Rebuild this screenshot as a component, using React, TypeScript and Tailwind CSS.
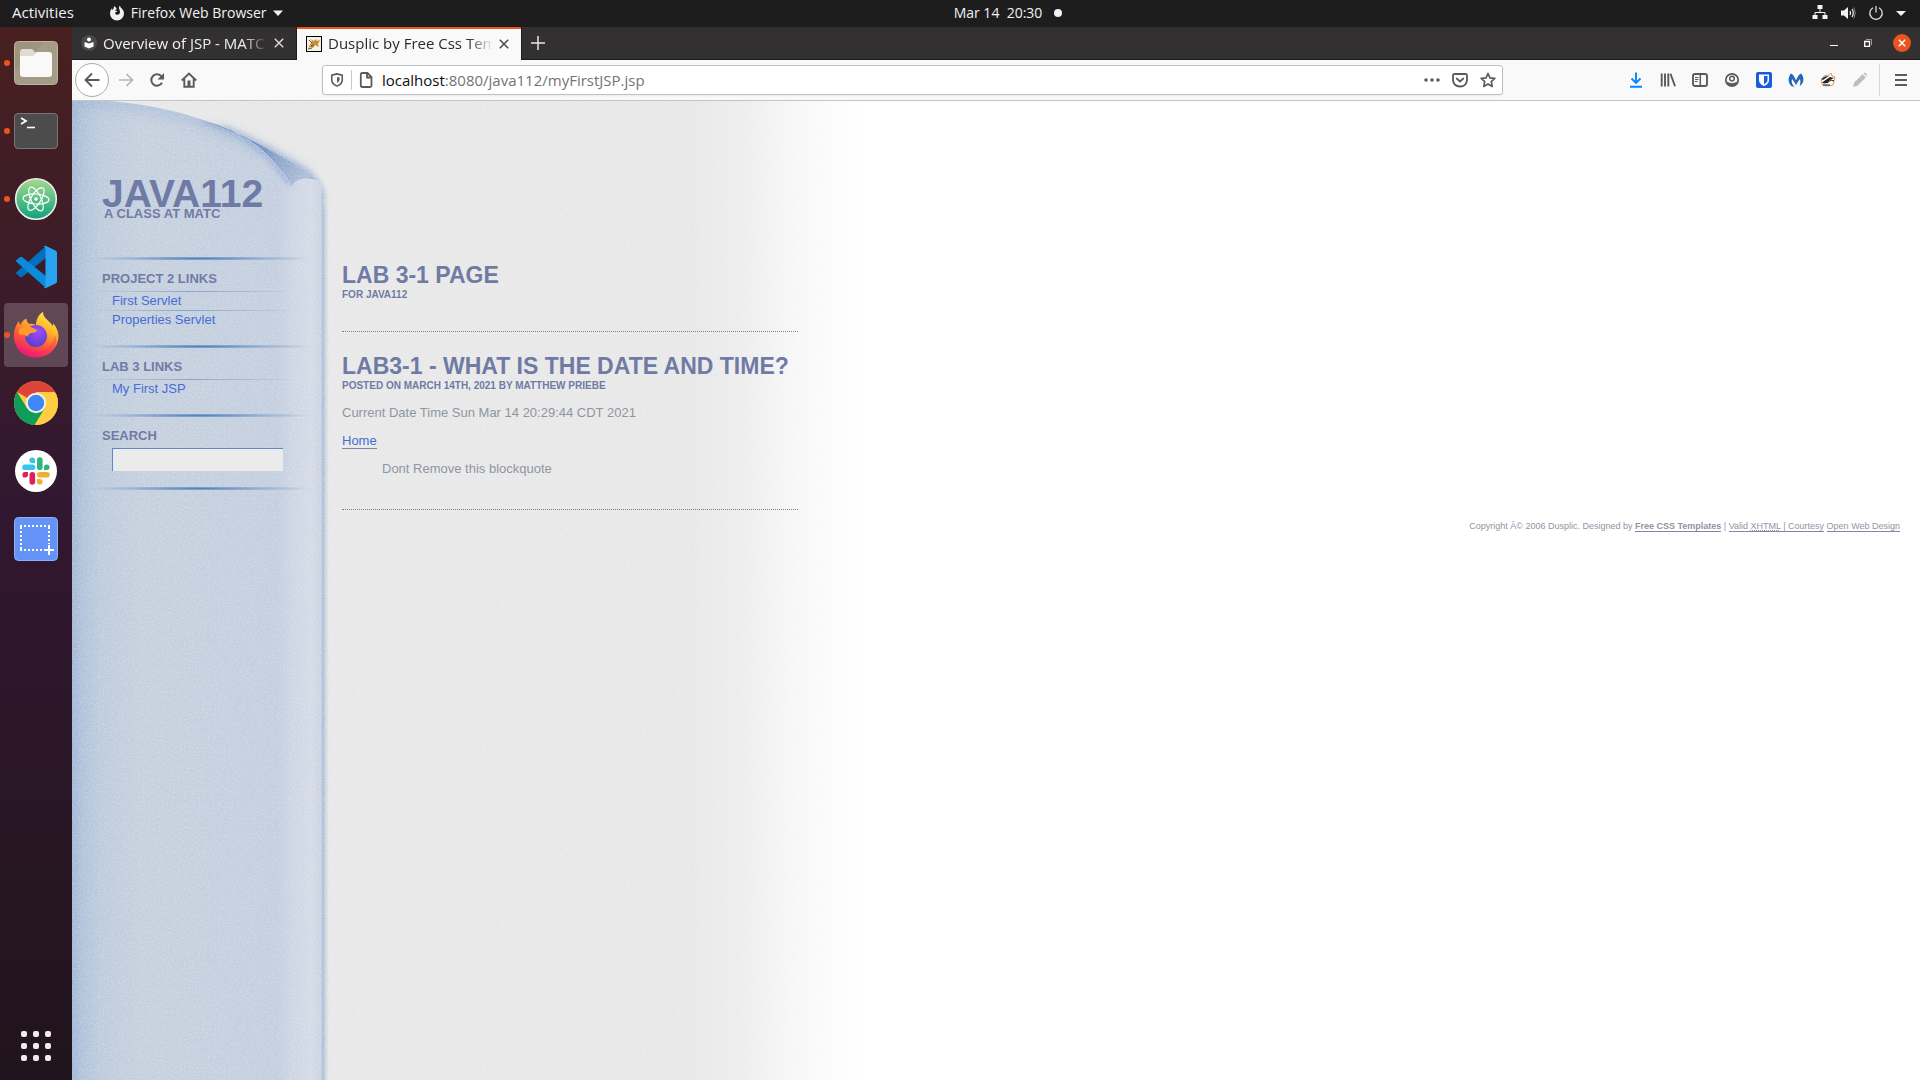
import React from "react";

const ui = "font-['Open_Sans','Noto_Sans',sans-serif]";

type IconProps = { className?: string; children: React.ReactNode; box?: string };

function Icon({ className = "size-4", box = "0 0 16 16", children }: IconProps) {
  return (
    <svg viewBox={box} className={"shrink-0 " + className} fill="none" aria-hidden="true">
      {children}
    </svg>
  );
}

function TopBar() {
  return (
    <header className="grid h-[27px] shrink-0 grid-cols-[1fr_auto_1fr] items-center bg-[#1d1d1d] pb-px text-sm text-[#f2f2f2]">
      <div className="flex items-center pl-3">
        <button type="button" className="mr-[35px] text-[15px]">Activities</button>
        <button type="button" className="flex items-center gap-1.5">
          <Icon>
            <path
              d="M8 15.5A7 7 0 0 1 1 8.4C1 6 2 4.300 3 3.200c0 .8.2 1.300.5 1.700C4.500 4 5.200 2.500 5 1c1.500.7 2.500 2 2.700 3.200-.9.2-1.500.7-1.700 1.300.7.300 1.300.4 2.300.5-.3 1-1.300 1.400-2.300 1.500.2 1.500 1.300 2.300 2.600 2.300A2.700 2.700 0 0 0 11 7c0-1.700-1-2.500-1-4 0-1.200.5-2 1-2.600 0 1.600 1.200 2.300 2.200 3.500C14.300 5.200 15 6.500 15 8.500a7 7 0 0 1-7 7z"
              fill="#f2f2f2"
            />
          </Icon>
          <span>Firefox Web Browser</span>
          <Icon className="size-2.5" box="0 0 10 10">
            <path d="M0 2.500h10L5 8z" fill="#f2f2f2" />
          </Icon>
        </button>
      </div>
      <button type="button" className="flex items-center gap-3 pl-24">
        <span className="whitespace-pre">Mar 14  20:30</span>
        <span className="size-2 rounded-full bg-[#f2f2f2]" />
      </button>
      <button type="button" aria-label="System menu" className="flex items-center justify-end gap-3 pr-3.5">
        <Icon className="size-4">
          <path d="M5.500 0h5v4h-5zM.5 10h5v4h-5zM10.500 10h5v4h-5z" fill="#f2f2f2" />
          <path d="M8 4v3.500M3 10V7.500h10V10" stroke="#f2f2f2" />
        </Icon>
        <Icon className="size-4">
          <path d="M1 5.500h3L8 2v12l-4-3.500H1z" fill="#f2f2f2" />
          <path d="M10 6q1.200 2 0 4" stroke="#f2f2f2" strokeWidth="1.300" />
          <path d="M12 4q2.600 4 0 8" stroke="#f2f2f2" strokeWidth="1.200" />
          <path d="M13.800 2.500q3 5.500 0 11" stroke="#888" />
        </Icon>
        <Icon className="size-4">
          <path d="M5 2.700a6.200 6.200 0 1 0 6 0M8 1v6.500" stroke="#f2f2f2" strokeWidth="1.200" />
        </Icon>
        <Icon className="size-2.5" box="0 0 10 10">
          <path d="M0 3h10L5 8z" fill="#f2f2f2" />
        </Icon>
      </button>
    </header>
  );
}

function FilesIcon() {
  return (
    <Icon className="size-11" box="0 0 44 44">
      <rect x=".5" y=".5" width="43" height="43" rx="4" fill="#9d947e" stroke="#bdb59f" />
      <path d="M1 30 30 1h10q3 0 3 3v36q0 3-3 3H4q-3 0-3-3z" fill="#a9a18c" opacity=".6" />
      <path d="M6 11q0-3 3-3h8q2 0 3 2l1 1.500H34V18H6z" fill="#dfdbd2" />
      <path d="M6 15h12q2 0 3-2t3-2h11q3 0 3 3v19q0 3-3 3H9q-3 0-3-3z" fill="#faf9f8" />
    </Icon>
  );
}

function TerminalIcon() {
  return (
    <Icon className="size-11" box="0 0 44 44">
      <rect x=".5" y="4.500" width="43" height="35" rx="3.500" fill="#4c4c4c" stroke="#777" />
      <path d="m7 9 5 3-5 3" stroke="#fff" strokeWidth="1.800" />
      <path d="M13 18.500h8" stroke="#fff" strokeWidth="1.600" />
    </Icon>
  );
}

function AtomIcon() {
  return (
    <Icon className="size-11" box="0 0 44 44">
      <defs>
        <linearGradient id="atom" x1="0" y1="0" x2="0" y2="1">
          <stop offset="0" stopColor="#a7d98c" />
          <stop offset="1" stopColor="#0fa27c" />
        </linearGradient>
      </defs>
      <circle cx="22" cy="22" r="20.300" fill="url(#atom)" stroke="#ececec" strokeWidth="1.600" />
      <g stroke="#fff" strokeWidth="1.200">
        <ellipse cx="22" cy="22" rx="13" ry="5" transform="rotate(4 22 22)" />
        <ellipse cx="22" cy="22" rx="13" ry="5" transform="rotate(64 22 22)" />
        <ellipse cx="22" cy="22" rx="13" ry="5" transform="rotate(122 22 22)" />
      </g>
      <circle cx="22" cy="22" r="1.800" fill="#fff" />
    </Icon>
  );
}

function CodeIcon() {
  return (
    <Icon className="size-11" box="0 0 44 44">
      <path d="m1.500 28 4.500 4q1 .7 2 0L32 13V1z" fill="#0070ba" />
      <path d="m1.500 16 4.500-4q1-.7 2 0L32 31v12z" fill="#0b8bdb" />
      <path d="m32 1 9.500 4.500q1.500.8 1.500 2v29q0 1.500-1.500 2L32 43q-1.500.5-2.500-.5 2 .5 2-2V3.500q0-2-2-2 1-1 2.500-.5z" fill="#27a3f2" />
    </Icon>
  );
}

function FirefoxIcon() {
  return (
    <Icon className="size-12" box="0 0 48 48">
      <defs>
        <linearGradient id="ffBody" x1=".8" y1="0" x2=".3" y2="1">
          <stop offset="0" stopColor="#fff14f" />
          <stop offset=".35" stopColor="#ffb329" />
          <stop offset=".65" stopColor="#ff5a36" />
          <stop offset="1" stopColor="#e8117f" />
        </linearGradient>
        <radialGradient id="ffGlobe" cx=".6" cy=".3" r=".8">
          <stop offset="0" stopColor="#a14bff" />
          <stop offset="1" stopColor="#4a3fc0" />
        </radialGradient>
      </defs>
      <path
        d="M24 46.500C11.500 46.500 1.800 37 1.800 25c0-6 2-11 5.200-15 .2 2 .6 3 1.500 4C9.500 11 12 8.500 14.500 7.500c0 2 .8 4 2.500 5.200 2.500-.2 5 .2 7 1.300C24 9 26.500 3.500 31 .8c0 5 3.500 7.200 7 10.700 1.500 1.500 2.200 2.500 2.500 3.500l.8-2.500C44.500 16 46.500 20.500 46.500 25c0 12-10 21.500-22.500 21.500z"
        fill="url(#ffBody)"
      />
      <circle cx="24" cy="25" r="11" fill="url(#ffGlobe)" />
      <path d="M7 19c4-4 9-5 14-2l4 2c0 2-3 3-6 3-2 1-3 2-4 4-1-2-4-3-8-2z" fill="#ff9b2a" />
      <path d="M3 31c5 9 15 12 24 10s15-9 16-17c5 12-5 22.500-19 22.500C13 46.500 5 41 3 31z" fill="#f3206f" opacity=".35" />
    </Icon>
  );
}

function ChromeIcon() {
  return (
    <Icon className="size-11" box="0 0 44 44">
      <circle cx="22" cy="22" r="22" fill="#ffcd41" />
      <path d="M22 22 3 11A22 22 0 0 1 41 11H22z" fill="#db4437" />
      <path d="M3 11A22 22 0 0 0 20.500 44L31 27l-9 5-9-5z" fill="#0f9d58" />
      <path d="M22 12h19.600A22 22 0 0 1 21 44l10.500-17z" fill="#ffcd41" />
      <circle cx="22" cy="22" r="10.200" fill="#f1f1f1" />
      <circle cx="22" cy="22" r="8.200" fill="#4285f4" />
    </Icon>
  );
}

function SlackIcon() {
  return (
    <Icon className="size-11" box="0 0 44 44">
      <circle cx="22" cy="22" r="21" fill="#fff" />
      <g strokeWidth="5.600" strokeLinecap="round">
        <path d="M11 18.300h7.500" stroke="#36c5f0" />
        <path d="M25.800 11v7.300" stroke="#2eb67d" />
        <path d="M25.800 25.700H33" stroke="#ecb22e" />
        <path d="M18.300 25.700V33" stroke="#e01e5a" />
      </g>
      <path d="M21 14V11a2.800 2.800 0 1 0-2.800 3z" fill="#36c5f0" />
      <path d="M30 21h3a2.800 2.800 0 1 0-3-2.800z" fill="#2eb67d" />
      <path d="M23 30v3a2.800 2.800 0 1 0 2.800-3z" fill="#ecb22e" />
      <path d="M14 23h-3a2.800 2.800 0 1 0 3 2.800z" fill="#e01e5a" />
    </Icon>
  );
}

function ScreenshotIcon() {
  return (
    <Icon className="size-11" box="0 0 44 44">
      <rect x=".5" y=".5" width="43" height="43" rx="4" fill="#6592f6" stroke="#8fb0f8" />
      <path d="M6 9h30M6 33h27M7 10v24M35 10v17" stroke="#fff" strokeWidth="2" strokeDasharray="2 2" />
      <path d="M35 28v10M30 33h10" stroke="#fff" strokeWidth="2" />
    </Icon>
  );
}

const apps = [
  { name: "Files", icon: <FilesIcon />, running: true },
  { name: "Terminal", icon: <TerminalIcon />, running: true },
  { name: "Atom", icon: <AtomIcon />, running: true },
  { name: "Visual Studio Code", icon: <CodeIcon />, running: false },
  { name: "Firefox", icon: <FirefoxIcon />, running: true, active: true },
  { name: "Chrome", icon: <ChromeIcon />, running: false },
  { name: "Slack", icon: <SlackIcon />, running: false },
  { name: "Screenshot", icon: <ScreenshotIcon />, running: false },
];

function Dock() {
  return (
    <nav className="flex w-[72px] shrink-0 flex-col items-center justify-between bg-linear-to-b from-[#48201f] via-[#321730] via-45% to-[#20141c] pt-1 pb-[13px]">
      <ul className="flex flex-col gap-1">
        {apps.map((app) => (
          <li key={app.name} className="relative">
            <button
              type="button"
              aria-label={app.name}
              className={"flex size-16 items-center justify-center rounded-sm " + (app.active ? "bg-white/20" : "")}
            >
              {app.icon}
            </button>
            {app.running && <span className="absolute top-[29px] left-0 size-1.5 rounded-full bg-[#e95420]" />}
          </li>
        ))}
      </ul>
      <button type="button" aria-label="Show applications" className="grid grid-cols-3 gap-1.5 p-1.5">
        {Array.from({ length: 9 }, (_, i) => (
          <span key={i} className="size-1.5 rounded-xs bg-[#efecee]" />
        ))}
      </button>
    </nav>
  );
}

function CloseGlyph({ className }: { className: string }) {
  return (
    <Icon className={"size-2.5 " + className} box="0 0 10 10">
      <path d="m.8.8 8.400 8.400M9.200.8.8 9.200" stroke="currentColor" strokeWidth="1.500" />
    </Icon>
  );
}

function TabStrip() {
  return (
    <div className="flex h-[33px] shrink-0 items-stretch border-b border-[#1d1b1c] bg-[#333031] text-[15px]">
      <div className="flex w-56 items-center gap-1.5 pr-3 pl-[9px] text-[#f0f0f0]">
        <Icon className="size-4">
          <circle cx="8" cy="8" r="8" fill="#4a4a4a" />
          <circle cx="8" cy="4.500" r="2" fill="#fff" />
          <path d="M3.500 7 8 8.500 12.500 7v4.500L8 13.500l-4.500-2z" fill="#fff" />
        </Icon>
        <span className="flex-1 overflow-hidden mask-r-from-85% whitespace-nowrap">Overview of JSP - MATC A</span>
        <button type="button" aria-label="Close tab"><CloseGlyph className="text-[#d8d8d8]" /></button>
      </div>
      <div className="-mb-px flex w-[226px] items-center gap-1.5 border-x border-[#1d1b1c] bg-[#f9f9fa] pr-3 pl-[9px] text-[#2b2b2b] shadow-[inset_0_2px_0_#e95420]">
        <Icon className="size-4">
          <rect x=".5" y=".5" width="15" height="15" fill="#f8f2e4" stroke="#000" />
          <path d="M2 12 4 9l2-4-2-2 4 2 2-2 1 2 3-1-2 4 1 3-4-2-2 3-3-1-2 1z" fill="#c98f35" />
          <path d="m3 4 3 3M5 10l3-1M2 13l4-1" stroke="#555" />
        </Icon>
        <span className="flex-1 overflow-hidden mask-r-from-85% whitespace-nowrap">Dusplic by Free Css Templates</span>
        <button type="button" aria-label="Close tab"><CloseGlyph className="text-[#4a4a4a]" /></button>
      </div>
      <button type="button" aria-label="New tab" className="px-2">
        <Icon className="size-4">
          <path d="M8 1v14M1 8h14" stroke="#e6e6e6" strokeWidth="1.500" />
        </Icon>
      </button>
      <div className="ml-auto flex items-center gap-4 pr-[9px]">
        <button type="button" aria-label="Minimize" className="flex size-[18px] items-center justify-center">
          <Icon className="size-2.5" box="0 0 10 10"><path d="M1 7.500h8" stroke="#fff" /></Icon>
        </button>
        <button type="button" aria-label="Restore" className="flex size-[18px] items-center justify-center">
          <Icon className="size-2.5" box="0 0 10 10">
            <path d="M1.700 3.500h4.800v4.800H1.700z" stroke="#fff" strokeWidth="1.300" />
            <path d="M3 1.500h5.500V7" stroke="#999" />
          </Icon>
        </button>
        <button type="button" aria-label="Close" className="flex size-[18px] items-center justify-center rounded-full bg-[#e95420]">
          <Icon className="size-2" box="0 0 8 8"><path d="m.8.8 6.400 6.400M7.200.8.8 7.200" stroke="#fff" strokeWidth="1.400" /></Icon>
        </button>
      </div>
    </div>
  );
}

const toolIcons = [
  { name: "Downloads", art: <path d="M8 .5v10M3.500 6.500 8 11l4.500-4.500M2 14.800h12" stroke="#0a84ff" strokeWidth="1.900" /> },
  { name: "Library", art: <path d="M1.700 1.500v13M5 1.500v13M8.300 1.500v13M10.500 1.800 15 14.300" stroke="#5a5a5b" strokeWidth="1.900" /> },
  {
    name: "Sidebars",
    art: (
      <g stroke="#5a5a5b">
        <rect x="1" y="2" width="14" height="12" rx="2" strokeWidth="1.900" />
        <path d="M8.300 2v12" strokeWidth="1.500" />
        <path d="M3 5.500h3.500M3 7.500h3.500M3 9.500h2.500" />
      </g>
    ),
  },
  {
    name: "Account",
    art: (
      <>
        <circle cx="8" cy="8" r="6.200" stroke="#5a5a5b" strokeWidth="1.700" />
        <circle cx="8" cy="6.600" r="2.300" stroke="#5a5a5b" strokeWidth="1.500" />
        <path d="M2.800 9.500q5.200 3.500 10.400 0Q12 14 8 14T2.800 9.500z" fill="#5a5a5b" />
      </>
    ),
  },
  {
    name: "Bitwarden",
    art: (
      <>
        <rect width="16" height="16" rx="2" fill="#175ddc" />
        <path d="M3 2.500h10V8q0 4-5 6-5-2-5-6z" fill="#fff" />
        <path d="M8 4h3.500v4q0 2.500-3.500 4.200z" fill="#175ddc" />
      </>
    ),
  },
  {
    name: "Malwarebytes",
    art: (
      <path
        d="M3 1.500C4.800 2 6.500 5 8 8.300 9.500 5 11.200 2 13 1.500c2.500 2.500 3.200 6 1.500 9.500-.6 1.300-1.500 2.300-2.700 3 .7-2.500.8-4.500.2-7-1.200 1.300-2.500 3-4 6.300C6.500 10 5.200 8.300 4 7c-.6 2.500-.3 4.500 1 6.200.7.800 1.300 1.100 2 1.300-2 .3-3.700-.2-4.500-1.500C-.5 9.500.300 4.500 3 1.500z"
        fill="#2467b5"
      />
    ),
  },
  {
    name: "Privacy Badger",
    art: (
      <>
        <path d="M1 9 4 4l5-1 2-2 1 3 3 1-1 4-1 4-5 1-5-.5z" fill="#fff" stroke="#d9822b" strokeWidth=".8" />
        <path d="M2 10.500 10 5l4 1-4 2-3 3-3 .5z" fill="#222" />
        <path d="M1 7 5 4.500 9 4 3 8z" fill="#333" />
        <path d="m7 11 4-3 3 1M3 13h7" stroke="#222" />
      </>
    ),
  },
  {
    name: "Edit",
    art: (
      <path d="m1 15 1.200-4.500L10.500 2.200l3.300 3.300-8.300 8.300zM11.500 1.300q1.500-1 2.700.3t.4 2.800z" fill="#bdbdbd" />
    ),
  },
];

function Toolbar() {
  return (
    <div className="flex h-[41px] shrink-0 items-center border-b border-[#c4c4c6] bg-[#f9f9fa] text-[#5a5a5b]">
      <button type="button" aria-label="Back" className="ml-0.5 flex size-9 items-center justify-center">
        <span className="flex size-[34px] items-center justify-center rounded-full border border-[#ababad] bg-white">
          <Icon><path d="M15.500 8H1.500M8 1.500 1.500 8 8 14.500" stroke="currentColor" strokeWidth="1.900" /></Icon>
        </span>
      </button>
      <button type="button" aria-label="Forward" className="flex h-8 w-[31px] items-center justify-center text-[#b5b5b6]">
        <Icon><path d="M1 8h13.500M8.500 2l6 6-6 6" stroke="currentColor" strokeWidth="1.700" /></Icon>
      </button>
      <button type="button" aria-label="Reload" className="flex size-8 items-center justify-center">
        <Icon>
          <path d="M13 10.800A5.700 5.700 0 1 1 12.500 4.500" stroke="currentColor" strokeWidth="2" />
          <path d="M15 1v6.500H8.500z" fill="currentColor" />
        </Icon>
      </button>
      <button type="button" aria-label="Home" className="flex size-8 items-center justify-center">
        <Icon>
          <path d="M.8 8.500 8 1.500l7.200 7M3.300 7v7.800h9.400V7" stroke="currentColor" strokeWidth="1.900" />
          <path d="M6.500 8.500h3V14h-3z" fill="currentColor" />
        </Icon>
      </button>
      <form className="mx-[117px] flex h-[30px] flex-1 items-center rounded-[3px] border border-[#c0c0c2] bg-white shadow-xs" onSubmit={(e) => e.preventDefault()}>
        <Icon className="ml-[7px] size-3.5">
          <path d="M8 1 2 2.500V8q0 4.500 6 7 6-2.500 6-7V2.500z" stroke="currentColor" strokeWidth="1.800" />
          <path d="M8 4.500v7q3-2 3-4v-2.300z" fill="currentColor" />
        </Icon>
        <span className="mr-1.5 ml-[7px] h-5 w-px bg-[#c8c8ca]" />
        <Icon>
          <path d="M2.800 2.500Q2.800 1 4.300 1H9.500L13.500 5v8.500q0 1.500-1.500 1.500H4.300q-1.500 0-1.500-1.500zM9 1v4.500h4.500" stroke="currentColor" strokeWidth="1.800" />
        </Icon>
        <div className="relative ml-2 flex-1 text-[15px] leading-6">
          <input aria-label="Address" defaultValue="localhost:8080/java112/myFirstJSP.jsp" className="block h-6 w-full bg-transparent text-[#737373] outline-none" />
          <span aria-hidden="true" className="pointer-events-none absolute top-0 left-0 bg-white text-[#0c0c0d]">localhost</span>
        </div>
        <div className="flex gap-3 pr-1.5">
          <button type="button" aria-label="Page actions">
            <Icon><path d="M2 8h.01M8 8h.01M14 8h.01" stroke="currentColor" strokeWidth="3.600" strokeLinecap="round" /></Icon>
          </button>
          <button type="button" aria-label="Save to Pocket">
            <Icon>
              <path d="M2.500 2h11Q15 2 15 3.500V8q0 3-2 4.800t-5 1.700q-3 0-5-1.700T1 8V3.500Q1 2 2.500 2z" stroke="currentColor" strokeWidth="1.800" />
              <path d="M4.700 6.500 8 9.500l3.300-3" stroke="currentColor" strokeWidth="1.800" strokeLinecap="round" />
            </Icon>
          </button>
          <button type="button" aria-label="Bookmark this page">
            <Icon>
              <path d="m8 1.500 2 4.300 4.800.6-3.500 3.300.9 4.700L8 12.100l-4.200 2.300.9-4.700L1.200 6.400 6 5.800z" stroke="currentColor" strokeWidth="1.700" strokeLinejoin="round" />
            </Icon>
          </button>
        </div>
      </form>
      {toolIcons.map((t) => (
        <button key={t.name} type="button" aria-label={t.name} className="flex size-8 items-center justify-center">
          <Icon>{t.art}</Icon>
        </button>
      ))}
      <span className="ml-[3px] h-8 w-px bg-[#d7d7db]" />
      <button type="button" aria-label="Open menu" className="flex w-10 items-center justify-center pr-1 pl-1.5">
        <Icon><path d="M2 3h12M2 8h12M2 13h12" stroke="currentColor" strokeWidth="1.900" /></Icon>
      </button>
    </div>
  );
}

function PaperCorner() {
  return (
    <svg className="absolute top-0 left-0 h-[130px] w-[300px]" viewBox="0 0 300 130" fill="none" aria-hidden="true">
      <defs>
        <filter id="soft" x="-20%" y="-20%" width="140%" height="140%"><feGaussianBlur stdDeviation="7" /></filter>
        <filter id="soft2" x="-20%" y="-20%" width="140%" height="140%"><feGaussianBlur stdDeviation="2.500" /></filter>
        <clipPath id="outside">
          <path d="M38 0Q92 5 131 19Q165 31 198 49L231 68Q251 79 251 98V130H300V0z" />
        </clipPath>
        <clipPath id="inside">
          <path d="M0 0H38Q92 5 131 19Q165 31 198 49L231 68Q251 79 251 98V130H0z" />
        </clipPath>
        <linearGradient id="curl" x1="131" y1="19" x2="240" y2="84" gradientUnits="userSpaceOnUse">
          <stop offset="0" stopColor="#3f6fae" />
          <stop offset=".35" stopColor="#5a82ba" />
          <stop offset=".7" stopColor="#8fa8cb" />
          <stop offset="1" stopColor="#b7c4d9" />
        </linearGradient>
        <linearGradient id="edgeFade" x1="0" y1="0" x2="0" y2="1">
          <stop offset="0" stopColor="#e8e8e8" />
          <stop offset=".65" stopColor="#e8e8e8" />
          <stop offset=".85" stopColor="#e8e8e8" stopOpacity="0" />
        </linearGradient>
      </defs>
      <g clipPath="url(#outside)">
        <rect width="300" height="130" fill="url(#edgeFade)" />
        <path d="M135 26Q165 34 198 51L231 70L240 82L200 80z" fill="#7f9dcb" filter="url(#soft)" />
        <path d="M150 26Q165 31 198 49L231 68Q251 79 251 98" stroke="#9fb4d3" strokeWidth="3" filter="url(#soft2)" />
      </g>
      <g clipPath="url(#inside)">
        <path d="M0 0H38Q92 5 131 19Q165 31 198 49" stroke="#8eaad2" strokeWidth="9" opacity=".6" filter="url(#soft)" />
        <path d="M131 19Q175 32 198 57Q210 70 219 83" stroke="#8fabd2" strokeWidth="6" opacity=".8" filter="url(#soft2)" />
      </g>
      <path d="M131 19Q165 31 198 49L231 68Q240 73 244 78Q226 73 219 84Q208 68 198 57Q175 32 131 19z" fill="url(#curl)" />
      <path d="M175 38Q188 46 198 57Q210 70 219 83" stroke="#c3d3ea" strokeWidth="1" opacity=".8" />
      <path d="M219 84Q226 73 244 78" stroke="#9fb6d8" strokeWidth="1.500" />
    </svg>
  );
}

function PaperGrain() {
  return (
    <svg className="absolute inset-y-0 left-0 h-full w-[850px] opacity-30" aria-hidden="true">
      <filter id="grain">
        <feTurbulence type="fractalNoise" baseFrequency="0.8" numOctaves="2" seed="4" />
        <feColorMatrix values="0 0 0 0 1  0 0 0 0 1  0 0 0 0 1  2.500 0 0 0 -1.100" />
      </filter>
      <rect width="100%" height="100%" filter="url(#grain)" />
    </svg>
  );
}

const menus = [
  { title: "Project 2 Links", links: ["First Servlet", "Properties Servlet"] },
  { title: "Lab 3 Links", links: ["My First JSP"] },
];

function Rule() {
  return <div className="ml-3.5 h-[3px] w-[226px] bg-radial-[50%_100%_at_50%_50%] from-[#4f80be] via-[#9db5d5] via-60% to-transparent" />;
}

function Sidebar() {
  return (
    <aside className="relative w-[253px] shrink-0 text-[13px] leading-[15px]">
      <div className="h-[156px] pt-[81px] pl-[30px] font-bold text-[#6f7ba5] uppercase">
        <h1 className="text-[39px] leading-6">Java112</h1>
        <p className="pl-0.5">A Class at MATC</p>
      </div>
      {menus.map((menu) => (
        <section key={menu.title} className="pb-4">
          <Rule />
          <h2 className="h-[31px] pt-[11px] pl-[30px] font-bold text-[#6f7ba5] uppercase">{menu.title}</h2>
          <ul>
            {menu.links.map((link) => (
              <li key={link} className="h-[19px]">
                <div className="ml-3.5 h-px w-[212px] bg-linear-to-r from-transparent via-[#8ba5c8] to-transparent" />
                <a href="#" className="ml-10 block pt-px text-[#466cd6]">{link}</a>
              </li>
            ))}
          </ul>
        </section>
      ))}
      <section className="pb-4">
        <Rule />
        <h2 className="h-[31px] pt-[11px] pl-[30px] font-bold text-[#6f7ba5] uppercase">
          <label htmlFor="search">Search</label>
        </h2>
        <input id="search" className="ml-10 block h-[23px] w-[171px] border-t border-l border-[#5b8ac6] bg-[#ebebeb] px-1 outline-none" />
      </section>
      <Rule />
    </aside>
  );
}

function PageContent() {
  return (
    <main className="ml-[17px] text-[13px] leading-[15px] text-[#8f95a2]">
      <div className="w-[456px]">
        <header className="border-b border-dotted border-[#808080] pt-[160px] pb-[30px] font-bold text-[#6f7ba5] uppercase">
          <h2 className="text-[23px] leading-7">Lab 3-1 Page</h2>
          <p className="text-[10px] leading-3">for Java112</p>
        </header>
        <article className="border-b border-dotted border-[#808080] pt-5 pb-[33px]">
          <h2 className="text-[23px] leading-7 font-bold text-[#6f7ba5] uppercase">Lab3-1 - What is the date and time?</h2>
          <p className="text-[10px] leading-3 font-bold text-[#6f7ba5] uppercase">Posted on March 14th, 2021 by Matthew Priebe</p>
          <p className="mt-[13px]">Current Date Time Sun Mar 14 20:29:44 CDT 2021</p>
          <p className="mt-[13px]"><a href="#" className="border-b border-[#7d87a0] text-[#466cd6]">Home</a></p>
          <blockquote className="mt-[13px] ml-10">Dont Remove this blockquote</blockquote>
        </article>
      </div>
      <footer className="pt-[10px] pr-5 text-right text-[9px] leading-3 text-[#8f95a2]">
        Copyright Â© 2006 Dusplic. Designed by{" "}
        <a href="#" className="border-b border-[#8087a0] font-bold">Free CSS Templates</a> |{" "}
        <a href="#" className="border-b border-[#8087a0]">Valid <abbr title="eXtensible HyperText Markup Language">XHTML</abbr> | Courtesy</a>{" "}
        <a href="#" className="border-b border-[#8087a0]">Open Web Design</a>
      </footer>
    </main>
  );
}

function WebPage() {
  return (
    <div className="relative min-h-0 flex-1 overflow-hidden bg-white font-['Liberation_Sans',Arial,sans-serif]">
      <div className="absolute inset-0 bg-[linear-gradient(to_right,#e8e8e8_620px,#ededee_670px,#f8f8f8_730px,#ffffff_790px)]" />
      <div className="absolute inset-y-0 left-0 w-[260px] bg-[linear-gradient(to_right,#a2b8d7_0px,#b1c2d9_10px,#bdcbdc_28px,#c5d0de_70px,#c3cedf_205px,#ced6e3_222px,#d4dae6_240px,#cbd3e3_249px,#a7bad1_251px,#c8d1de_253px,#e8e8e8_257px)]" />
      <PaperCorner />
      <PaperGrain />
      <div className="relative flex">
        <Sidebar />
        <div className="flex-1"><PageContent /></div>
      </div>
    </div>
  );
}

export default function App() {
  return (
    <div className={"flex h-screen flex-col overflow-hidden " + ui}>
      <TopBar />
      <div className="flex min-h-0 flex-1">
        <Dock />
        <div className="flex min-w-0 flex-1 flex-col">
          <TabStrip />
          <Toolbar />
          <WebPage />
        </div>
      </div>
    </div>
  );
}
